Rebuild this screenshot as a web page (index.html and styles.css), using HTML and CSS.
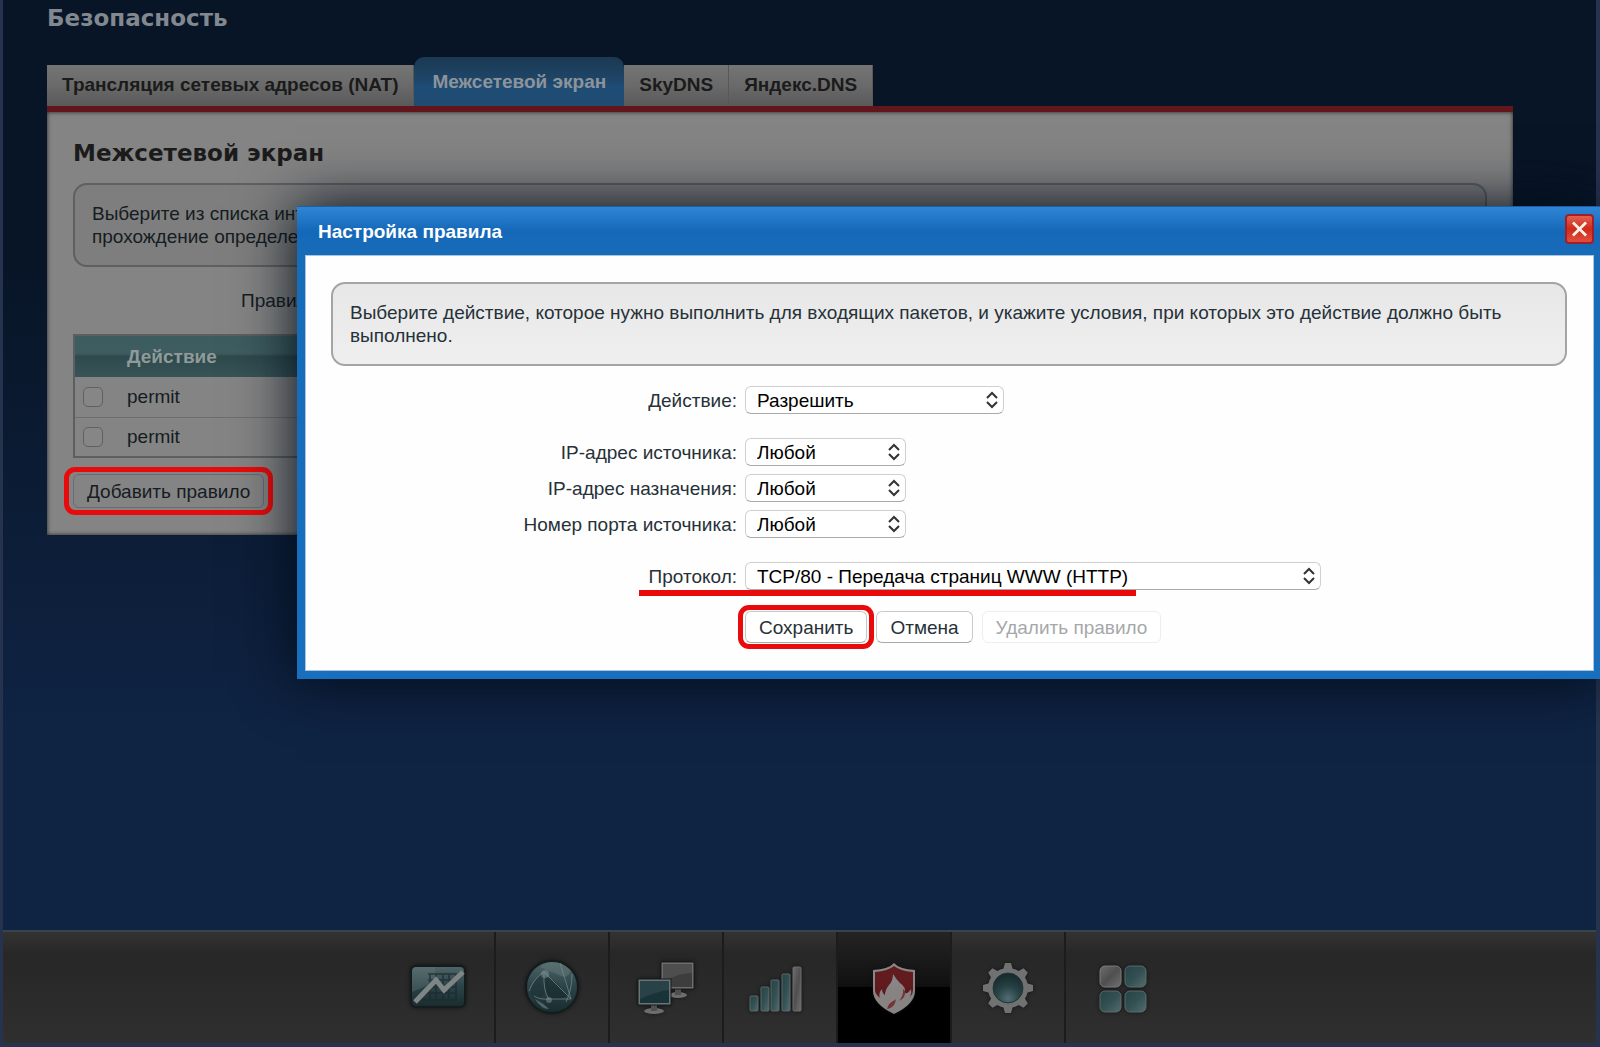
FILE: index.html
```html
<!DOCTYPE html>
<html lang="ru">
<head>
<meta charset="utf-8">
<meta name="viewport" content="width=device-width, initial-scale=1">
<title>Безопасность</title>
<link rel="stylesheet" href="styles.css">
</head>
<body>
<div class="app">
  <main class="page">
    <h1 class="page-title">Безопасность</h1>
    <nav class="tabs">
      <a class="tab" href="#nat">Трансляция сетевых адресов (NAT)</a>
      <a class="tab tab-active" href="#firewall">Межсетевой экран</a>
      <a class="tab" href="#skydns">SkyDNS</a>
      <a class="tab" href="#yandex">Яндекс.DNS</a>
    </nav>
    <section class="panel">
      <h2 class="panel-title">Межсетевой экран</h2>
      <p class="note note-dim">Выберите из списка интерфейс<br>прохождение определенных</p>
      <p class="rules-for">Правила</p>
      <table class="rules">
        <thead>
          <tr><th class="pick"></th><th>Действие</th></tr>
        </thead>
        <tbody>
          <tr><td class="pick"><input type="checkbox" class="check" aria-label="Правило 1"></td><td>permit</td></tr>
          <tr><td class="pick"><input type="checkbox" class="check" aria-label="Правило 2"></td><td>permit</td></tr>
        </tbody>
      </table>
      <span class="marked"><button type="button" class="btn btn-dim">Добавить правило</button></span>
    </section>
  </main>

  <nav class="dock" aria-label="Разделы">
    <a class="dock-item" href="#monitor" aria-label="Монитор">
      <svg class="icon" viewBox="0 0 64 64">
        <defs>
          <linearGradient id="teal" x1="0" y1="0" x2="0" y2="1"><stop offset="0" stop-color="#557073"/><stop offset=".5" stop-color="#2b474b"/><stop offset="1" stop-color="#172c30"/></linearGradient>
          <linearGradient id="tile" x1="0" y1="0" x2="1" y2="1"><stop offset="0" stop-color="#26464a"/><stop offset=".5" stop-color="#345558"/><stop offset="1" stop-color="#5c7577"/></linearGradient>
          <linearGradient id="grey" x1="0" y1="0" x2="1" y2="1"><stop offset="0" stop-color="#777"/><stop offset=".5" stop-color="#555"/><stop offset="1" stop-color="#7a7a7a"/></linearGradient>
          <radialGradient id="lens" cx=".5" cy=".85" r=".8"><stop offset="0" stop-color="#55777b"/><stop offset=".5" stop-color="#284549"/><stop offset="1" stop-color="#152b2f"/></radialGradient>
        </defs>
        <rect x="5" y="10" width="54" height="41" rx="5" fill="url(#teal)" stroke="#121a1b" stroke-width="2"/>
        <path d="M6 36L20 30L29 22V11H11Q6 11 6 16Z" fill="#708487" opacity=".35"/>
        <path d="M22 18h28v26H16M22 24h28M20 31h30M18 37h32M24 18v26M30 18v26M37 18v26M43 18v26" fill="none" stroke="#172c30" stroke-width="2" opacity=".6"/>
        <path d="M9 46L30 24L38 34L57 16" fill="none" stroke="#8b9191" stroke-width="5"/>
      </svg>
    </a>
    <a class="dock-item" href="#internet" aria-label="Интернет">
      <svg class="icon" viewBox="0 0 64 64">
        <circle cx="32" cy="31" r="26" fill="url(#teal)" stroke="#121a1b" stroke-width="2"/>
        <path d="M32 6a25 25 0 0 1 19 9q-4 8-10 5t-9-4q-8-3-12-5q5-5 12-5z" fill="#70898b" opacity=".45"/>
        <path d="M26 20q8 4 13 10t8 10q-8 4-18 3q-5-10-3-23z" fill="#12292d" opacity=".6"/>
        <path d="M10 36q3-14 15-20q2 12 5 19q-8 6-14 8q-4-2-6-7z" fill="#1a3236" opacity=".55"/>
        <path d="M15 43q8 4 14 10q-8 0-14-10z" fill="#70898b" opacity=".7"/>
        <path d="M24 16L51 43Q46 26 40 7M24 16Q23 36 29 43L51 43M9 35Q14 22 24 16M29 43Q20 44 14 40M52 18Q52 34 46 46" fill="none" stroke="#839b9d" stroke-width="1" opacity=".7"/>
        <circle cx="25" cy="18" r="4" fill="#8ca1a3" opacity=".5"/>
        <circle cx="29" cy="44" r="3" fill="#8ca1a3" opacity=".5"/>
      </svg>
    </a>
    <a class="dock-item" href="#network" aria-label="Домашняя сеть">
      <svg class="icon" viewBox="0 0 64 64">
        <ellipse cx="44" cy="39" rx="9" ry="3" fill="#777"/>
        <path d="M41 33h6v6h-6z" fill="#555"/>
        <rect x="27" y="6" width="33" height="27" fill="#777" stroke="#191919"/>
        <rect x="29" y="8" width="29" height="23" fill="#404040"/>
        <path d="M29 8h29v9Q44 17 29 26z" fill="#545454"/>
        <ellipse cx="20" cy="55" rx="10" ry="3" fill="#777"/>
        <path d="M17 49h6v6h-6z" fill="#555"/>
        <rect x="4" y="23" width="33" height="26" fill="#708083" stroke="#191919"/>
        <rect x="6" y="25" width="29" height="22" fill="#17363b"/>
        <path d="M6 25h29v9Q21 36 6 43z" fill="#28464b"/>
      </svg>
    </a>
    <a class="dock-item" href="#wifi" aria-label="Сеть Wi-Fi">
      <svg class="icon" viewBox="0 0 64 64">
        <g fill="url(#tile)" stroke="#617477">
          <rect x="2" y="40" width="8" height="15" rx="1"/>
          <rect x="13" y="31" width="8" height="24" rx="1"/>
          <rect x="23" y="24" width="8" height="31" rx="1"/>
          <rect x="34" y="18" width="8" height="37" rx="1"/>
        </g>
        <rect x="45" y="11" width="8" height="44" rx="1" fill="url(#grey)" stroke="#777"/>
      </svg>
    </a>
    <a class="dock-item dock-item-active" href="#security" aria-label="Безопасность">
      <svg class="icon" viewBox="0 0 64 64">
        <path d="M32 7Q37 13 53 14V35Q53 48 32 58Q11 48 11 35V14Q27 13 32 7Z" fill="#9a9696"/>
        <path d="M32 10Q38 15 51 16V34Q51 38 48 41Q50 37 49 33Q46 38 43 37Q44 31 38 27Q34 23 31 18Q31 25 27 29Q23 34 23 39Q20 37 20 33Q16 37 18 42Q13 38 13 34V16Q26 15 32 10Z" fill="#6d1d21"/>
        <path d="M41 33Q42 39 37 45Q44 42 43 35ZM33 44Q26 47 25 53Q33 52 34 43Z" fill="#873c40"/>
      </svg>
    </a>
    <a class="dock-item" href="#system" aria-label="Система">
      <svg class="icon" viewBox="0 0 64 64">
        <g fill="#7a7c7c">
          <path d="M27 14L29 7H35L37 14V50L35 57H29L27 50Z"/>
          <path d="M27 14L29 7H35L37 14V50L35 57H29L27 50Z" transform="rotate(45 32 32)"/>
          <path d="M27 14L29 7H35L37 14V50L35 57H29L27 50Z" transform="rotate(90 32 32)"/>
          <path d="M27 14L29 7H35L37 14V50L35 57H29L27 50Z" transform="rotate(135 32 32)"/>
          <circle cx="32" cy="32" r="20"/>
        </g>
        <circle cx="32" cy="32" r="15" fill="url(#lens)" stroke="#263538" stroke-width="1"/>
      </svg>
    </a>
    <a class="dock-item" href="#apps" aria-label="Приложения">
      <svg class="icon" viewBox="0 0 64 64">
        <rect x="9" y="10" width="21" height="21" rx="5" fill="url(#grey)" stroke="#858585"/>
        <g fill="url(#tile)" stroke="#617477">
          <rect x="34" y="10" width="21" height="21" rx="5"/>
          <rect x="9" y="35" width="21" height="21" rx="5"/>
          <rect x="34" y="35" width="21" height="21" rx="5"/>
        </g>
      </svg>
    </a>
  </nav>
</div>

<div class="dialog" role="dialog" aria-labelledby="dialog-title">
  <header class="dialog-head">
    <h2 class="dialog-title" id="dialog-title">Настройка правила</h2>
    <button type="button" class="close" aria-label="Закрыть">
      <svg class="close-icon" viewBox="0 0 16 16"><path d="M1 1L15 15M15 1L1 15"/></svg>
    </button>
  </header>
  <form class="dialog-body">
    <p class="note">Выберите действие, которое нужно выполнить для входящих пакетов, и укажите условия, при которых это действие должно быть выполнено.</p>
    <div class="fields">
      <label for="action">Действие:</label>
      <select id="action" class="select select-medium"><option>Разрешить</option></select>
      <label class="group" for="src">IP-адрес источника:</label>
      <select id="src" class="select group"><option>Любой</option></select>
      <label for="dst">IP-адрес назначения:</label>
      <select id="dst" class="select"><option>Любой</option></select>
      <label for="port">Номер порта источника:</label>
      <select id="port" class="select"><option>Любой</option></select>
      <label class="group underlined" for="proto">Протокол:</label>
      <select id="proto" class="select select-wide group"><option>TCP/80 - Передача страниц WWW (HTTP)</option></select>
      <div class="actions">
        <span class="marked"><button type="submit" class="btn">Сохранить</button></span>
        <button type="button" class="btn">Отмена</button>
        <button type="button" class="btn" disabled>Удалить правило</button>
      </div>
    </div>
  </form>
</div>
</body>
</html>
```
FILE: styles.css
```css
* {
  box-sizing: border-box;
}

body {
  margin: 0;
  font: 19px/23px "Liberation Sans", Arial, sans-serif;
  color: #263138;
}

h1, h2, p {
  margin: 0;
}

.app {
  display: flex;
  flex-direction: column;
  min-height: 100vh;
  border: solid #26334f;
  border-width: 0 4px 4px 3px;
  background: linear-gradient(#081527, #081527 25%, #0f2343 70%, #0f2443);
}

/* Page behind the dialog */
.page {
  flex: 1;
  padding: 4px 83px 24px 44px;
}

.page-title,
.panel-title {
  font: bold 23px/28px "DejaVu Sans", Verdana, sans-serif;
}

.page-title {
  color: #82888f;
}

.tabs {
  display: flex;
  align-items: flex-end;
  margin-top: 25px;
}

.tab {
  height: 41px;
  padding: 0 15px;
  border-right: 1px solid #585858;
  background: linear-gradient(#747474, #6a6a6a 50%, #595959);
  color: #1b1b1b;
  font-weight: bold;
  line-height: 39px;
  text-decoration: none;
  white-space: nowrap;
}

.tab-active {
  height: 49px;
  padding: 0 18px;
  border: 0;
  border-radius: 10px 10px 0 0;
  background: linear-gradient(#1b3952, #1e4568 45%, #1d4c76 60%, #214c70);
  color: #8d9499;
  line-height: 49px;
}

.panel {
  padding: 27px 26px;
  border-top: 6px solid #62151b;
  background: #848484;
  box-shadow: inset 0 0 4px #222;
}

.panel-title {
  color: #1b1b1b;
}

.note {
  padding: 17px;
  border: 2px solid #a4a4a4;
  border-radius: 14px;
  background: linear-gradient(#e7e7e7, #efefef);
}

.note-dim {
  margin-top: 16px;
  border-color: #5e6062;
  background: #7e7e7e;
  color: #151c22;
}

.rules-for {
  margin: 22px 0 22px 168px;
  color: #151c22;
}

.rules {
  width: 100%;
  border: 2px solid #5c5f60;
  border-collapse: collapse;
  color: #151c22;
}

.rules th {
  height: 42px;
  padding: 0;
  background: linear-gradient(#3c5c5f, #3f5d60 42%, #2e4a4d 50%, #385457);
  color: #919a9b;
  text-align: left;
}

.rules td {
  height: 40px;
  padding: 0;
  border-bottom: 1px solid #6b6d6e;
}

.rules .pick {
  width: 53px;
  padding-left: 8px;
}

.check {
  display: block;
  width: 20px;
  height: 20px;
  margin: 0;
  border: 1px solid #606060;
  border-radius: 5px;
  background: #868686;
  appearance: none;
}

.btn {
  height: 32px;
  padding: 0 13px;
  border: 1px solid #c9c9c9;
  border-bottom-color: #a9a9a9;
  border-radius: 6px;
  background: #fff;
  color: #263138;
  font: inherit;
}

.btn:disabled {
  border-color: #eee;
  color: #a5a8aa;
}

.btn-dim {
  height: 34px;
  border-color: #686c70;
  background: #848484;
  color: #151c22;
}

/* Red frame around the button to press */
.marked {
  position: relative;
  display: inline-block;
}

.marked::after {
  content: "";
  position: absolute;
  inset: -6px -7px;
  border: 5px solid #e90b0b;
  border-radius: 11px;
  pointer-events: none;
}

.panel .marked {
  margin-top: 16px;
}

.panel .marked::after {
  inset: -7px -9px;
}

/* Bottom section bar */
.dock {
  display: flex;
  justify-content: center;
  height: 113px;
  padding-right: 38px;
  border-top: 2px solid #38434a;
  background: linear-gradient(#333, #272727 20%, #2f2f2f);
}

.dock-item {
  display: flex;
  align-items: center;
  justify-content: center;
  width: 114px;
  border-right: 2px solid #1c1c1c;
}

.dock-item:last-child {
  border-right: 0;
}

.dock-item-active {
  background: linear-gradient(#242424, #101010 49%, #000 50%);
}

.icon {
  width: 64px;
  height: 64px;
  opacity: .88;
  filter: drop-shadow(0 0 2px #111);
}

/* Rule dialog */
.dialog {
  position: absolute;
  top: 206px;
  left: 297px;
  right: 0;
  padding: 0 6px 8px 8px;
  border-top: 1px solid #1c5f9e;
  background: linear-gradient(#2f86d6, #1568b8 24px, #176cb9 48px, #176fbd);
  box-shadow: 0 0 56px #000c18;
}

.dialog-head {
  display: flex;
  align-items: center;
  justify-content: space-between;
  height: 48px;
  padding-left: 13px;
}

.dialog-title {
  color: #fff;
  font-size: 19px;
}

.close {
  display: flex;
  width: 29px;
  height: 30px;
  margin-bottom: 4px;
  padding: 5px;
  border: 2px solid #a01f2c;
  border-radius: 4px;
  background: linear-gradient(#e2604f, #cf2a1a 50%, #e04f3e);
}

.close-icon {
  width: 16px;
  height: 16px;
  fill: none;
  stroke: #fff0e8;
  stroke-width: 3;
}

.dialog-body {
  padding: 26px 26px 27px 25px;
  border: 1px solid #a9c4dc;
  background: #fefefe;
}

.fields {
  display: grid;
  grid-template-columns: 406px 1fr;
  align-items: center;
  gap: 8px;
  margin-top: 20px;
}

.fields label {
  text-align: right;
}

.group {
  margin-top: 16px;
}

.underlined {
  position: relative;
}

.underlined::after {
  content: "";
  position: absolute;
  top: 25px;
  left: 308px;
  width: 497px;
  height: 6px;
  background: #e90b0b;
}

.select {
  width: 161px;
  height: 28px;
  padding: 0 32px 0 11px;
  border: 1px solid #cfcfcf;
  border-bottom-color: #aaa;
  border-radius: 6px;
  background: #fff url("data:image/svg+xml,%3Csvg xmlns='http://www.w3.org/2000/svg' width='12' height='18' fill='none' stroke='%23333' stroke-width='2'%3E%3Cpath d='M1 7L6 2L11 7M1 11L6 16L11 11'/%3E%3C/svg%3E") no-repeat right 5px center;
  color: #000;
  font: inherit;
  appearance: none;
}

.select-medium {
  width: 259px;
}

.select-wide {
  width: 576px;
}

.actions {
  display: flex;
  grid-column: 2;
  gap: 9px;
  margin-top: 13px;
}
```
